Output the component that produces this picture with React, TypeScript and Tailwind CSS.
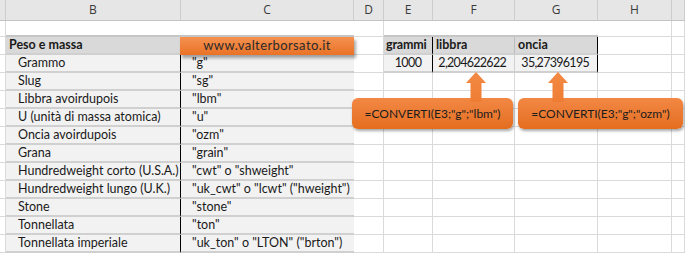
import React from 'react';

// column widths A..I
const widths = [6, 175, 173, 30, 49, 82, 83, 74, 13];
const letters = ['', 'B', 'C', 'D', 'E', 'F', 'G', 'H', ''];

const units: [string, string][] = [
  ['Grammo', '"g"'],
  ['Slug', '"sg"'],
  ['Libbra avoirdupois', '"lbm"'],
  ['U (unità di massa atomica)', '"u"'],
  ['Oncia avoirdupois', '"ozm"'],
  ['Grana', '"grain"'],
  ['Hundredweight corto (U.S.A.)', '"cwt" o "shweight"'],
  ['Hundredweight lungo (U.K.)', '"uk_cwt" o "lcwt" ("hweight")'],
  ['Stone', '"stone"'],
  ['Tonnellata', '"ton"'],
  ['Tonnellata imperiale', '"uk_ton" o "LTON" ("brton")'],
];

type CellProps = {
  w: number;
  className?: string;
  children?: React.ReactNode;
};

function Cell({ w, className = 'border-r border-b border-[#dadada]', children }: CellProps) {
  return (
    <div className={`box-border shrink-0 h-full flex items-center overflow-visible whitespace-nowrap ${className}`} style={{ width: w }}>
      {children}
    </div>
  );
}

function Blank({ i }: { i: number }) {
  return <Cell w={widths[i]} />;
}

function UpArrow({ left }: { left: number }) {
  return (
    <svg className="absolute top-[72px]" style={{ left }} width="22" height="30" viewBox="0 0 22 30">
      <defs>
        <linearGradient id={`arr${left}`} x1="0" y1="0" x2="0" y2="1">
          <stop offset="0" stopColor="#f38a45" />
          <stop offset="1" stopColor="#ee7d33" />
        </linearGradient>
      </defs>
      <polygon points="11,0 21,11 16.5,11 16.5,30 5.5,30 5.5,11 1,11" fill={`url(#arr${left})`} />
    </svg>
  );
}

function Callout({ left, width, text }: { left: number; width: number; text: string }) {
  return (
    <div
      className="absolute top-[98px] h-[31px] rounded-[6px] bg-linear-to-b from-[#f28844] to-[#e46d1d] shadow-[1px_2px_3px_rgba(0,0,0,0.35)] flex items-center justify-center text-[12px] text-[#1c1c1c]"
      style={{ left, width }}
    >
      {text}
    </div>
  );
}

export default function App() {
  return (
    <div className="relative w-[685px] h-[253px] overflow-hidden bg-white font-['Lato',sans-serif] text-[12.5px] text-[#1a1a1a]">
      {/* column header */}
      <div className="flex h-[21px] bg-[#e6e6e6] border-b border-[#c4c4c4] box-border font-['Open_Sans',sans-serif] text-[12px] text-[#3a3a3a]">
        {letters.map((l, i) => (
          <div key={i} className="box-border shrink-0 h-full border-r border-[#cdcdcd] flex items-center justify-center" style={{ width: widths[i] }}>
            {l}
          </div>
        ))}
      </div>

      {/* row 2, empty */}
      <div className="flex h-[16px]">
        <Blank i={0} />
        <Cell w={widths[1]} className="border-b-2 border-[#c6c6c6]" />
        <Cell w={widths[2]} className="border-b-2 border-[#c6c6c6]" />
        <Blank i={3} />
        <Cell w={widths[4]} className="border-b-2 border-[#c6c6c6]" />
        <Cell w={widths[5]} className="border-b-2 border-[#c6c6c6]" />
        <Cell w={widths[6]} className="border-b-2 border-[#c6c6c6]" />
        <Blank i={7} />
        <Blank i={8} />
      </div>

      {/* row 3, table headers */}
      <div className="flex h-[18px]">
        <Blank i={0} />
        <Cell w={widths[1]} className="bg-[#d9d9d9] border-b-2 border-[#d0d0d0] pl-[3px] font-bold">Peso e massa</Cell>
        <Cell w={widths[2]} className="bg-[#d9d9d9] border-b-2 border-[#d0d0d0]" />
        <Blank i={3} />
        <Cell w={widths[4]} className="bg-[#d9d9d9] border-b-2 border-[#d0d0d0] border-r border-r-black pl-[2px] font-bold tracking-[-0.2px]">grammi</Cell>
        <Cell w={widths[5]} className="bg-[#d9d9d9] border-b-2 border-[#d0d0d0] border-r border-r-[#bdbdbd] pl-[3px] font-bold">libbra</Cell>
        <Cell w={widths[6]} className="bg-[#d9d9d9] border-b-2 border-[#d0d0d0] border-r border-r-black pl-[3px] font-bold">oncia</Cell>
        <Blank i={7} />
        <Blank i={8} />
      </div>

      {units.map(([name, code], r) => (
        <div key={name} className="flex h-[18px]">
          <Blank i={0} />
          <Cell w={widths[1]} className="bg-[#f2f2f2] border-b-2 border-[#d0d0d0] border-r border-r-black pl-[12px]">{name}</Cell>
          <Cell w={widths[2]} className="bg-[#f2f2f2] border-b-2 border-[#d0d0d0] pl-[11px]">{code}</Cell>
          <Blank i={3} />
          {r === 0 ? (
            <>
              <Cell w={widths[4]} className="bg-[#f2f2f2] border-b-2 border-[#d0d0d0] border-r border-r-black justify-center tracking-[-0.6px]">1000</Cell>
              <Cell w={widths[5]} className="bg-[#f2f2f2] border-b-2 border-[#d0d0d0] border-r border-r-[#d0d0d0] justify-end pr-[8px] tracking-[-0.7px]">2,204622622</Cell>
              <Cell w={widths[6]} className="bg-[#f2f2f2] border-b-2 border-[#d0d0d0] border-r border-r-black justify-end pr-[8px] tracking-[-0.7px]">35,27396195</Cell>
            </>
          ) : (
            <>
              <Blank i={4} />
              <Blank i={5} />
              <Blank i={6} />
            </>
          )}
          <Blank i={7} />
          <Blank i={8} />
        </div>
      ))}

      {/* site banner over C3 */}
      <div className="absolute left-[180px] top-[37px] w-[174px] h-[18px] bg-linear-to-b from-[#f4914e] to-[#ea7225] shadow-[2px_3px_3px_rgba(0,0,0,0.35)] flex items-center justify-center text-[13px] tracking-[0.4px] text-[#2a2a2a]">
        www.valterborsato.it
      </div>

      {/* formula callouts */}
      <Callout left={352} width={161} text={'=CONVERTI(E3;"g";"lbm")'} />
      <Callout left={518} width={165} text={'=CONVERTI(E3;"g";"ozm")'} />
      <UpArrow left={465} />
      <UpArrow left={547} />
    </div>
  );
}
